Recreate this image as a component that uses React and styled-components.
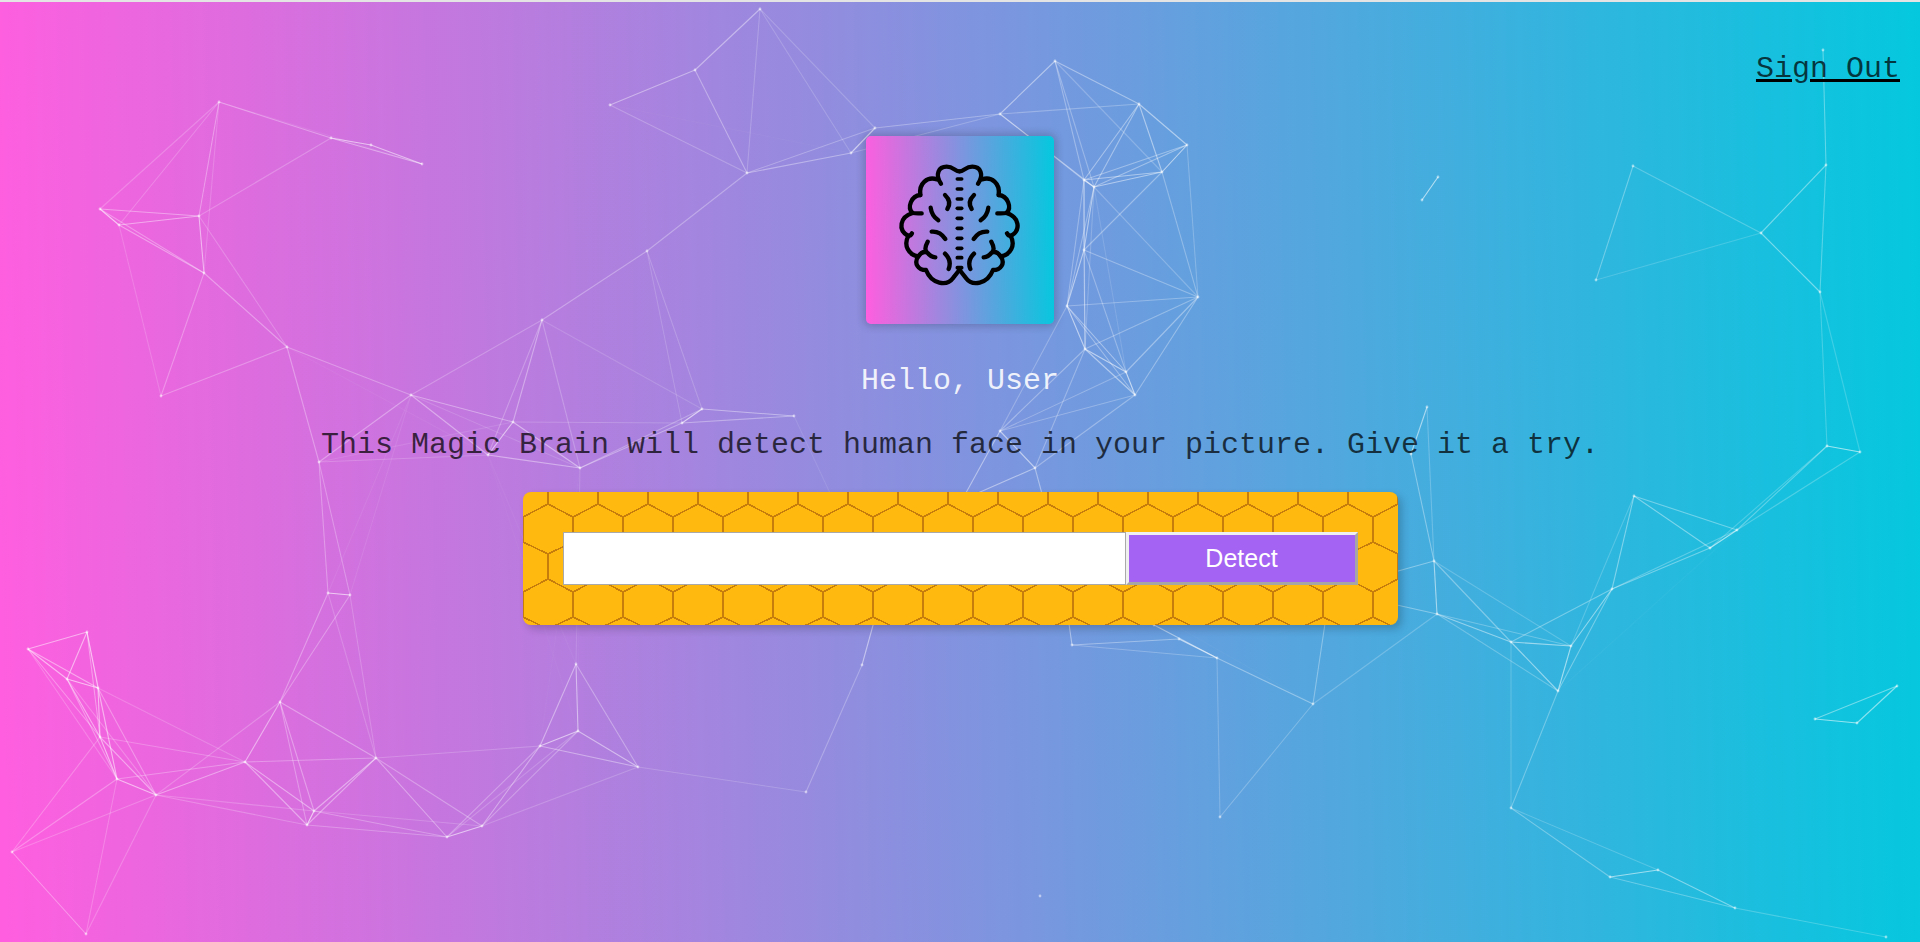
import React from "react";
import styled, { createGlobalStyle } from "styled-components";

const nodes = {
  A1: [219, 102], A2: [331, 138], A3: [371, 145], A4: [422, 164], A5: [100, 209], A6: [119, 225],
  A7: [199, 216], A8: [204, 273], A9: [287, 347], A10: [161, 396], A11: [411, 395], A12: [542, 320],
  A13: [513, 422], A14: [488, 455], A15: [319, 462], A16: [580, 468], A17: [610, 105],
  B1: [87, 632], B2: [28, 649], B3: [67, 679], B4: [98, 688], B5: [100, 737], B6: [117, 779],
  B7: [156, 795], B8: [12, 852], B9: [86, 934], B10: [245, 762], B11: [280, 702], B12: [314, 811],
  B13: [307, 825], B14: [376, 758], B15: [447, 837], B16: [482, 826], B17: [328, 593], B18: [350, 595],
  B19: [540, 746], B20: [578, 731], B21: [576, 664], B22: [638, 767],
  C1: [760, 9], C2: [695, 70], C3: [747, 173], C4: [647, 251], C5: [851, 153], C6: [875, 128],
  C7: [1000, 114], C8: [1055, 61], C9: [1139, 104], C10: [1187, 145], C11: [1162, 172], C12: [1084, 180],
  C13: [1094, 187], C14: [1084, 250], C15: [1198, 297], C16: [1067, 306], C17: [1085, 349], C18: [1126, 372],
  C19: [1135, 395], C20: [1000, 431], C21: [1035, 468], C22: [702, 409], C23: [682, 423], C24: [794, 416],
  D1: [1438, 177], D2: [1422, 200], D3: [1633, 166], D4: [1761, 233], D5: [1826, 165], D6: [1596, 280],
  D7: [1820, 292], D8: [1827, 446], D9: [1860, 452], D10: [1427, 407], D11: [1411, 454], D12: [1634, 496],
  D13: [1737, 530], D14: [1710, 548], D15: [1823, 50],
  E1: [1434, 561], E2: [1437, 614], E3: [1511, 642], E4: [1571, 646], E5: [1558, 691], E6: [1612, 589],
  E7: [1511, 808], E8: [1610, 877], E9: [1658, 870], E10: [1735, 908], E11: [1886, 937], E12: [1815, 719],
  E13: [1857, 723], E14: [1897, 686], E15: [1313, 704],
  F1: [862, 665], F2: [806, 792], F3: [1040, 896], F4: [1072, 645], F5: [1217, 658], F6: [1220, 817],
  H1: [962, 500], H2: [1060, 560], H3: [1330, 590], H4: [1154, 625], H5: [1179, 639], H6: [880, 600],
};

const edges = `A1-A2 A1-A4 A2-A3 A3-A4 A2-A4 A1-A5 A1-A6 A1-A7 A1-A8 A2-A7 A5-A7 A5-A6 A6-A7 A6-A8 A5-A8 A7-A8
A7-A9 A8-A9 A8-A10 A6-A10 A9-A10 A9-A11 A9-A15 A9-A14 A11-A15 A11-A14 A11-A13 A11-A16 A11-B17 A11-B18 A13-A14
A15-A13 A15-A14 A14-A16 A12-A13 A12-A14 A12-A16 A12-A11 A12-C4 A13-A16 A13-C23 A16-C23 A16-C22 A15-B17 A15-B18
A14-B21 A14-B20 A16-B21 A16-B20 A16-B19 B1-B2 B1-B3 B1-B4 B1-B5 B1-B6 B2-B3 B2-B4 B2-B5 B2-B6 B3-B4 B3-B5 B3-B6
B3-B7 B4-B5 B4-B6 B4-B7 B4-B10 B5-B6 B5-B7 B5-B10 B5-B8 B6-B7 B6-B8 B6-B9 B6-B10 B7-B8 B7-B9 B7-B10 B7-B11
B7-B12 B7-B13 B8-B9 B10-B11 B10-B12 B10-B13 B10-B14 B11-B14 B11-B12 B11-B13 B11-B17 B11-B18 B12-B13 B12-B14
B13-B14 B12-B15 B13-B15 B14-B15 B14-B16 B15-B16 B12-B16 B14-B19 B17-B18 B17-B14 B18-B14 B16-B19 B15-B19 B15-B20
B16-B20 B16-B22 B19-B20 B19-B21 B19-B22 B20-B21 B20-B22 B21-B22 B22-F2 F1-F2 F1-H6 A17-C2 A17-C3 C2-C1 C2-C3
C1-C3 C1-C5 C1-C6 A17-C5 C3-C5 C3-C6 C6-C5 C6-C7 C5-C7 C3-C4 C4-C22 C4-C23 C22-C23 C22-C24 C23-C24 C24-H6
A12-C22 C7-C8 C7-C9 C7-C12 C7-C13 C8-C9 C8-C11 C8-C12 C8-C13 C9-C10 C9-C11 C9-C12 C9-C13 C10-C11 C10-C12 C10-C13
C11-C12 C11-C13 C11-C14 C12-C13 C12-C14 C12-C16 C12-C17 C13-C14 C13-C16 C13-C17 C13-C18 C13-C15 C10-C15 C11-C15
C14-C15 C14-C16 C14-C17 C14-C18 C15-C16 C15-C17 C15-C18 C15-C19 C16-C17 C16-C18 C16-C19 C17-C18 C17-C19 C18-C19
C16-C20 C17-C20 C18-C20 C19-C20 C17-C21 C19-C21 C20-C21 C20-H1 C21-H1 C21-H2 F4-H2 F4-F5 F4-H5 H4-F5 F5-E15 F5-F6
F6-E15 E15-E2 E15-H3 E15-H2 H5-F5 D11-E1 D10-D11 D10-E1 E1-E2 E1-E3 E1-E4 E2-E3 E2-E4 E2-E5 E3-E4 E3-E5 E4-E5
E4-E6 E5-E6 E3-E6 E3-E7 E5-E7 E6-D12 D12-D13 D12-D14 D13-D14 D14-E6 D13-E6 D8-D13 D8-D14 D9-D13 D8-D9 D7-D8
D7-D9 D7-D4 D5-D4 D5-D7 D5-D15 D3-D4 D3-D6 D4-D6 E4-D12 E5-D13 E7-E8 E7-E9 E8-E9 E8-E10 E9-E10 E10-E11 E12-E13
E13-E14 E12-E14 D1-D2 E1-H3 E2-H3`
  .split(/\s+/)
  .map((pair) => pair.split("-"));

const hexTile = encodeURIComponent(
  `<svg xmlns="http://www.w3.org/2000/svg" width="50" height="75"><path d="M25 0V12L0 25V50L25 62V75M25 12L50 25V50L25 62" fill="none" stroke="#c67d0c" stroke-width="1.6" shape-rendering="crispEdges"/></svg>`
);

const GlobalStyle = createGlobalStyle`
  html, body {
    margin: 0;
    padding: 0;
    background: #e4e4e4;
  }
  * {
    box-sizing: border-box;
  }
`;

const Page = styled.div`
  position: relative;
  height: 942px;
  overflow: hidden;
  border-top: 2px solid #e4e4e4;
  background: linear-gradient(89deg, #ff5edf 0%, #04c8de 100%);
  font-family: "Courier New", "Liberation Mono", monospace;
  text-align: center;
`;

const NetworkCanvas = styled.svg`
  position: absolute;
  top: -2px;
  left: 0;
`;

const Content = styled.div`
  position: relative;
`;

const Nav = styled.nav`
  display: flex;
  justify-content: flex-end;
  padding: 50px 20px 0;
`;

const SignOut = styled.a`
  font-size: 30px;
  line-height: 34px;
  color: rgba(0, 0, 0, 0.72);
  text-decoration: underline #000;
  text-decoration-thickness: 3px;
  cursor: pointer;
`;

const LogoBox = styled.div`
  display: flex;
  align-items: center;
  justify-content: center;
  width: 188px;
  height: 188px;
  margin: 50px auto 0;
  padding-bottom: 10px;
  border-radius: 5px;
  background: linear-gradient(89deg, #ff5edf 0%, #04c8de 100%);
  box-shadow: 0 0 8px 2px rgba(0, 0, 0, 0.2);
`;

const Greeting = styled.p`
  margin: 40px 0 0;
  font-size: 30px;
  line-height: 34px;
  color: rgba(255, 255, 255, 0.88);
`;

const Hint = styled.p`
  margin: 30px 0 0;
  font-size: 30px;
  line-height: 34px;
  color: rgba(0, 0, 0, 0.72);
`;

const DetectForm = styled.form`
  display: flex;
  width: 875px;
  height: 133px;
  margin: 30px auto 0;
  padding: 40px;
  border-radius: 8px;
  background-color: #ffb90f;
  background-image: url("data:image/svg+xml,${hexTile}");
  box-shadow: 4px 4px 8px 0 rgba(0, 0, 0, 0.2);
`;

const UrlInput = styled.input`
  flex: 1;
  min-width: 0;
  height: 53px;
  border: 1px solid #a9a9a9;
  background: #fff;
  font-size: 25px;
  outline: none;
`;

const DetectButton = styled.button`
  width: 232px;
  height: 53px;
  border: 3px solid;
  border-color: #efefef #a6a6a6 #a6a6a6 #efefef;
  background: #a463f2;
  color: #fff;
  font-family: "Liberation Sans", Arial, sans-serif;
  font-size: 25px;
  cursor: pointer;
`;

const Network = () => (
  <NetworkCanvas width="1920" height="942" viewBox="0 0 1920 942" aria-hidden="true">
    {edges.map(([from, to]) => {
      const [x1, y1] = nodes[from];
      const [x2, y2] = nodes[to];
      const length = Math.hypot(x2 - x1, y2 - y1);
      const opacity = Math.max(0.03, 0.7 * Math.pow(Math.max(0, 1 - length / 260), 1.3));
      return (
        <line
          key={`${from}-${to}`}
          x1={x1}
          y1={y1}
          x2={x2}
          y2={y2}
          stroke="#fff"
          strokeWidth="1.1"
          strokeOpacity={opacity}
        />
      );
    })}
    {Object.entries(nodes).map(([name, [cx, cy]]) => (
      <circle key={name} cx={cx} cy={cy} r="1.4" fill="#fff" fillOpacity="0.5" />
    ))}
  </NetworkCanvas>
);

const brainDashes = [72, 102, 132, 160, 190, 220, 250, 280, 308, 338];

const brainHalf = [
  "M208 49C196 49 190 35 170 35C146 35 134 58 153 86",
  "M141 73C112 64 86 84 91 120",
  "M91 120C64 122 50 158 68 174Q78 176 95 175",
  "M68 174C30 185 22 225 55 243Q62 243 66 235",
  "M55 243C40 270 55 300 85 304",
  "M85 304C70 325 85 345 108 345C125 388 170 395 190 368Q198 358 208 345",
  "M113 260Q100 284 112 293Q122 306 136 307M112 293Q98 286 85 304",
  "M165 120Q186 140 172 162",
  "M122 158Q125 182 145 196",
  "M125 230Q150 228 166 252",
  "M165 296Q186 316 176 342",
];

const BrainIcon = () => (
  <svg width="140" height="140" viewBox="0 0 420 420" fill="none" stroke="#000" strokeWidth="13" strokeLinecap="round" strokeLinejoin="round">
    <g>
      {brainHalf.map((d) => (
        <path key={d} d={d} />
      ))}
    </g>
    <g transform="translate(417 0) scale(-1 1)">
      {brainHalf.map((d) => (
        <path key={d} d={d} />
      ))}
    </g>
    {brainDashes.map((y) => (
      <line key={y} x1="202" x2="215" y1={y} y2={y} strokeWidth="11" />
    ))}
  </svg>
);

const App = () => {
  return (
    <Page>
      <GlobalStyle />
      <Network />
      <Content>
        <Nav>
          <SignOut>Sign Out</SignOut>
        </Nav>
        <LogoBox>
          <BrainIcon />
        </LogoBox>
        <Greeting>Hello, User</Greeting>
        <Hint>This Magic Brain will detect human face in your picture. Give it a try.</Hint>
        <DetectForm onSubmit={(e) => e.preventDefault()}>
          <UrlInput type="text" />
          <DetectButton type="submit">Detect</DetectButton>
        </DetectForm>
      </Content>
    </Page>
  );
};

export default App;
